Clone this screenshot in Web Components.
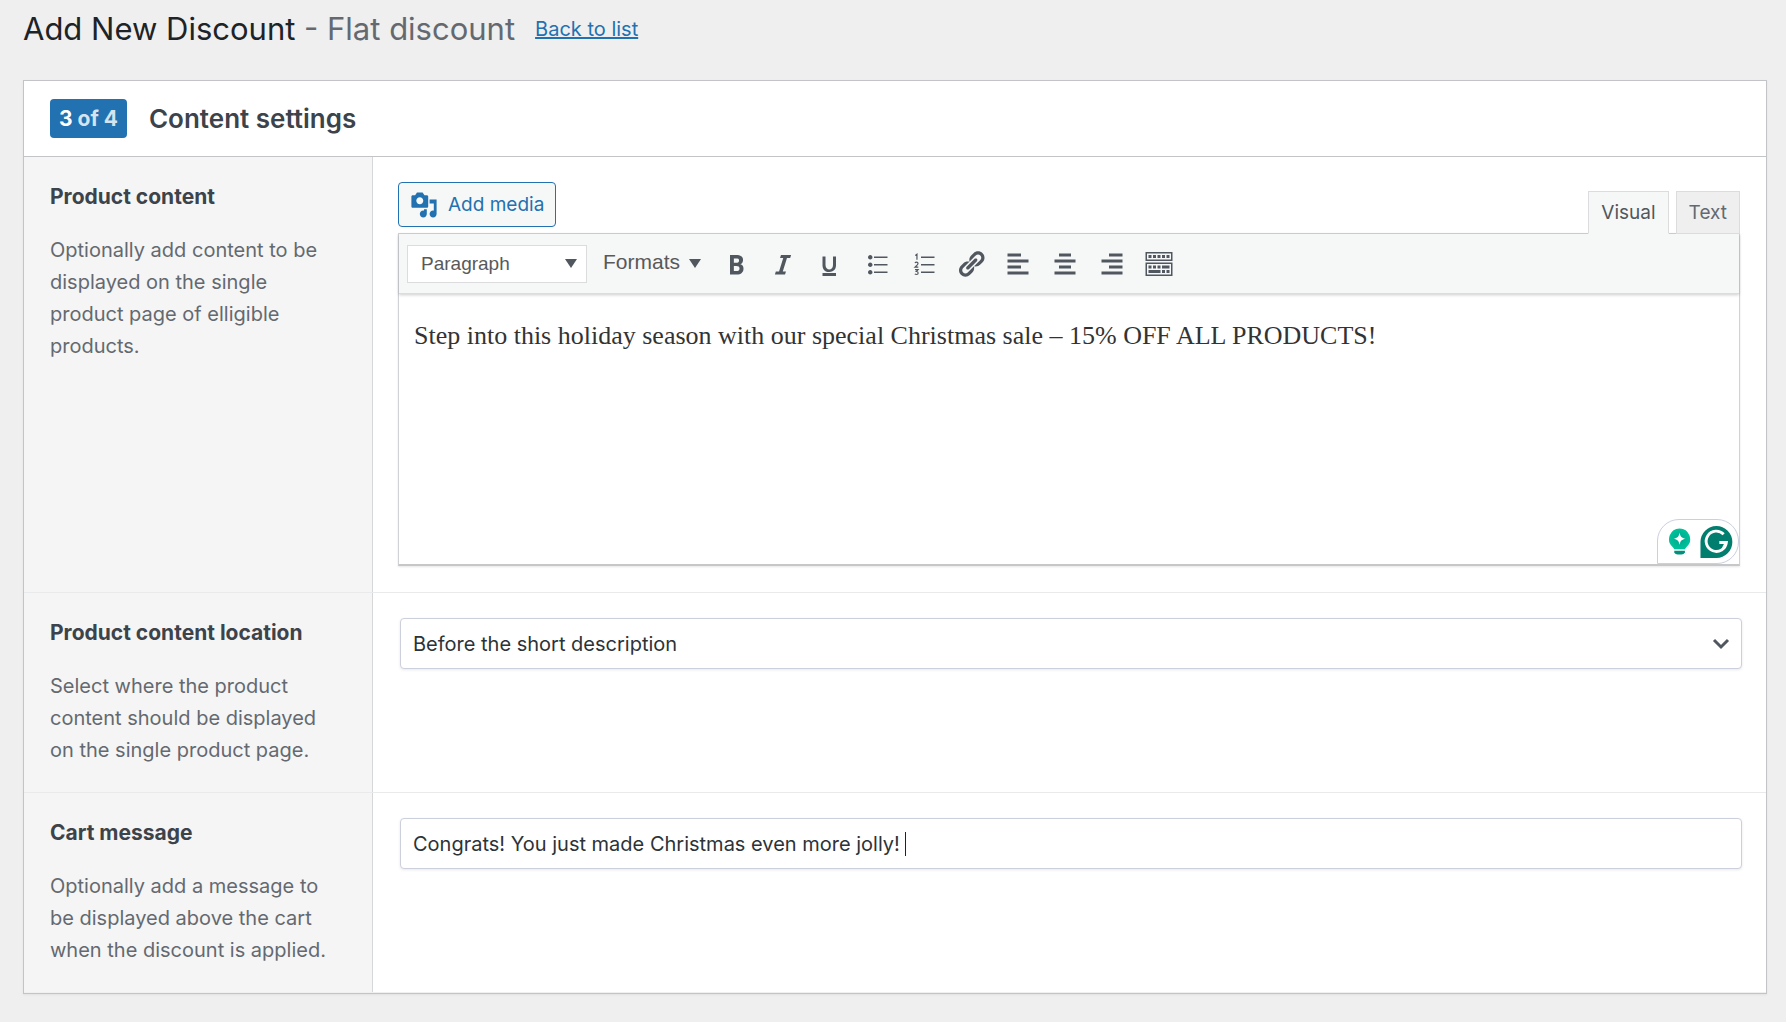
<!DOCTYPE html>
<html lang="en">
<head>
<meta charset="utf-8">
<title>Add New Discount</title>
<style>
  html { background: #efefef; }
  body { margin: 0; font-family: Inter, "Open Sans", sans-serif; color: #1d2327; }
</style>
</head>
<body>
<discount-page></discount-page>

<template id="tpl-page">
  <style>
    :host { display: block; padding: 0 19px 28px 23px; }
    label { cursor: inherit; }
    .field { display: grid; padding: 25px 24px 25px 27px; position: relative; }
    .field > * { grid-area: 1 / 1; }
    .control {
      appearance: none; box-sizing: border-box; width: 100%; height: 51px; margin: 0;
      padding: 0 12px; border: 1px solid #cbd0dc; border-radius: 4px; background: #fff;
      box-shadow: 0 1px 3px rgba(0, 0, 0, .09); font: 20px/28px Inter, sans-serif; color: #2c3338; outline: 0;
    }
    .chevron { justify-self: end; align-self: center; margin-right: 12px; pointer-events: none; }
    .caret { align-self: center; width: 1px; height: 24px; background: #1d2327; pointer-events: none; }
  </style>
  <page-header>
    Add New Discount
    <span slot="kind">- Flat discount</span>
    <a slot="link" href="#list">Back to list</a>
  </page-header>
  <settings-card step="3" total="4">
    <span slot="title">Content settings</span>
    <setting-row>
      <span slot="title">Product content</span>
      <span slot="description">Optionally add content to be displayed on the single product page of elligible products.</span>
      <rich-editor label="Product content">Step into this holiday season with our special Christmas sale – 15% OFF ALL PRODUCTS!</rich-editor>
    </setting-row>
    <setting-row>
      <label slot="title" for="location">Product content location</label>
      <span slot="description">Select where the product content should be displayed on the single product page.</span>
      <div class="field">
        <select class="control" id="location"><option>Before the short description</option></select>
        <svg class="chevron" width="18" height="12" viewBox="0 0 18 12"><path d="M2 2l7 7 7-7" fill="none" stroke="#50575e" stroke-width="3"/></svg>
      </div>
    </setting-row>
    <setting-row>
      <label slot="title" for="message">Cart message</label>
      <span slot="description">Optionally add a message to be displayed above the cart when the discount is applied.</span>
      <div class="field">
        <input class="control" id="message" type="text" value="Congrats! You just made Christmas even more jolly! ">
        <span class="caret"></span>
      </div>
    </setting-row>
  </settings-card>
</template>

<template id="tpl-header">
  <style>
    :host { display: flex; align-items: center; gap: 20px; height: 80px; box-sizing: border-box; padding-bottom: 22px; }
    h1 { margin: 0; font-size: 31px; line-height: 40px; font-weight: 400; }
    ::slotted(span) { color: #646970; }
    ::slotted(a) { color: #2271b1; font-size: 20px; line-height: 24px; }
  </style>
  <h1><slot></slot> <slot name="kind"></slot></h1>
  <slot name="link"></slot>
</template>

<template id="tpl-card">
  <style>
    :host { display: block; background: #fff; border: 1px solid #c3c4c7; box-shadow: 0 1px 2px rgba(0, 0, 0, .06); }
    header { display: flex; align-items: center; gap: 22px; height: 75px; padding: 0 26px; border-bottom: 1px solid #c3c4c7; }
    h2 { margin: 0; font-size: 26px; line-height: 32px; font-weight: 600; color: #3c434a; }
    .badge { padding: 0 9px; border-radius: 4px; background: #2271b1; color: #d3e3f0; font-size: 21px; line-height: 39px; font-weight: 700; }
    b { color: #fff; font-weight: 700; }
  </style>
  <header>
    <span class="badge"><b></b> of <span class="total"></span></span>
    <h2><slot name="title"></slot></h2>
  </header>
  <slot></slot>
</template>

<template id="tpl-row">
  <style>
    :host { display: flex; border-bottom: 1px solid #e9eaeb; }
    :host(:last-of-type) { border-bottom-color: #f0f0f1; }
    .side { box-sizing: border-box; flex: 0 0 349px; padding: 24px 32px 26px 26px; background: #f5f5f5; border-right: 1px solid #d5d7d9; }
    h3 { margin: 0 0 21px; font-size: 21px; line-height: 32px; font-weight: 700; color: #3c434a; }
    p { margin: 0; font-size: 20px; line-height: 32px; color: #646970; }
    .main { flex: 1; min-width: 0; }
  </style>
  <div class="side"><h3><slot name="title"></slot></h3><p><slot name="description"></slot></p></div>
  <div class="main"><slot></slot></div>
</template>

<template id="tpl-editor">
  <style>
    :host { display: block; padding: 25px 26px 26px 25px; }
    button, select, textarea { font-family: inherit; margin: 0; }
    .top { display: flex; justify-content: space-between; align-items: flex-end; }
    .media {
      display: flex; align-items: center; gap: 10px; height: 45px; padding: 0 11px; margin-bottom: 6px;
      border: 1px solid #2271b1; border-radius: 4px; background: #f6f7f7; color: #2271b1; font-size: 19px;
    }
    .tabs { display: flex; gap: 7px; margin-bottom: -1px; position: relative; z-index: 1; }
    .tabs button { box-sizing: border-box; height: 43px; padding: 0 12px; border: 1px solid #dcdcde; background: #efefef; color: #646970; font-size: 19px; line-height: 40px; }
    .tabs .on { background: #f6f7f7; border-bottom-color: #f6f7f7; color: #50575e; }
    .frame { position: relative; border: 1px solid #d0d2d5; border-bottom: 2px solid #c6c7c9; box-shadow: 0 1px 2px rgba(0, 0, 0, .1); }
    .bar { display: flex; align-items: center; height: 59px; padding: 0 8px; background: #f6f7f7; border-bottom: 1px solid #dcdcde; box-shadow: 0 1px 3px rgba(0, 0, 0, .2); position: relative; }
    .pick { display: grid; width: 180px; }
    .pick > * { grid-area: 1 / 1; }
    .pick select { appearance: none; box-sizing: border-box; height: 38px; padding: 0 13px; border: 1px solid #dcdcde; border-radius: 0; background: #fff; font: 19px/24px "Liberation Sans", sans-serif; color: #595959; }
    .pick svg { justify-self: end; align-self: center; margin-right: 10px; pointer-events: none; }
    .formats { display: flex; align-items: center; gap: 9px; padding: 0 12px 0 16px; border: 0; background: none; font: 21px/26px "Liberation Sans", sans-serif; color: #595959; }
    .formats span { padding-bottom: 3px; }
    .tool { display: grid; place-items: center; width: 45px; height: 45px; padding: 0; border: 0; background: none; color: #50575e; }
    .tools { display: flex; gap: 2px; }
    textarea { display: block; box-sizing: border-box; width: 100%; height: 270px; padding: 25px 15px; border: 0; resize: none; outline: 0; background: #fff; font: 26px/34px "Liberation Serif", serif; color: #333; }
    .assist {
      position: absolute; right: 0; bottom: 0; box-sizing: border-box; width: 82px; height: 45px; display: flex; align-items: center;
      gap: 9px; padding: 0 5px 0 10px; background: #fff; border: 1px solid #cbd0e0; border-radius: 22px 22px 22px 0;
    }
  </style>
  <div class="top">
    <button class="media" type="button"><tool-icon name="media" size="28"></tool-icon>Add media</button>
    <div class="tabs"><button class="on" type="button">Visual</button><button type="button">Text</button></div>
  </div>
  <div class="frame">
    <div class="bar">
      <div class="pick">
        <select aria-label="Block format"><option>Paragraph</option></select>
        <svg width="12" height="9" viewBox="0 0 12 9"><path d="M0 0h12L6 9z" fill="#50575e"/></svg>
      </div>
      <button class="formats" type="button"><span>Formats</span><svg width="12" height="9" viewBox="0 0 12 9"><path d="M0 0h12L6 9z" fill="#50575e"/></svg></button>
      <div class="tools"></div>
    </div>
    <textarea></textarea>
    <div class="assist">
      <svg width="24" height="30" viewBox="0 0 24 30">
        <defs><radialGradient id="glow"><stop offset="0" stop-color="#00a78e"/><stop offset="1" stop-color="#00c29a"/></radialGradient></defs>
        <path d="M12 1a11 11 0 0 1 7.200 19.200Q18 21.500 17.500 22.500h-11Q6 21.500 4.800 20.200A11 11 0 0 1 12 1z" fill="url(#glow)"/>
        <path d="M12 5.500c.8 4 2.200 5.400 6.200 6.200-4 .8-5.400 2.200-6.200 6.200-.8-4-2.200-5.400-6.200-6.200 4-.8 5.400-2.200 6.200-6.200z" fill="#fff"/>
        <path d="M6.500 24h11v1.500q-1 2.500-3.500 2.500h-4q-2.500 0-3.500-2.500z" fill="#00917c"/>
      </svg>
      <svg width="34" height="34" viewBox="0 0 34 34">
        <path d="M17 .5A16.500 16.500 0 1 1 17 33.500H.5V17A16.500 16.500 0 0 1 17 .5z" fill="#027e6f"/>
        <path d="M24.500 9A10.500 10.500 0 1 0 27.300 17.500H20M27.300 17.500L24 24" fill="none" stroke="#fff" stroke-width="3"/>
      </svg>
    </div>
  </div>
</template>

<script>
  const ICONS = {
    media: '<path d="M13 11V4c0-.55-.45-1-1-1h-1.67L9 1H5L3.670 3H2c-.55 0-1 .45-1 1v7c0 .55.45 1 1 1h10c.55 0 1-.45 1-1zM7 4.500c1.380 0 2.500 1.120 2.500 2.500S8.380 9.500 7 9.500 4.500 8.380 4.500 7 5.620 4.500 7 4.500zM14 6h5v10.500c0 1.380-1.120 2.500-2.500 2.500S14 17.880 14 16.500s1.120-2.500 2.500-2.500c.17 0 .34.02.5.05V9h-3V6zm-4 8.050V13h2v3.500c0 1.380-1.120 2.500-2.500 2.500S7 17.880 7 16.500 8.120 14 9.500 14c.17 0 .34.02.5.05z"/>',
    bold: '<path d="M6 4v13h4.540c1.370 0 2.460-.33 3.260-1 .8-.66 1.200-1.580 1.200-2.770 0-.84-.17-1.510-.51-2.010s-.9-.85-1.670-1.030v-.09c.57-.1 1.020-.4 1.360-.9s.51-1.130.51-1.910c0-1.140-.39-1.980-1.170-2.500C12.750 4.260 11.500 4 9.780 4H6zm2.570 5.150V6.260h1.360c.73 0 1.270.11 1.610.32.34.22.51.58.51 1.070 0 .54-.16.92-.47 1.150s-.82.35-1.510.35h-1.500zm0 2.190h1.600c1.440 0 2.160.53 2.160 1.610 0 .6-.17 1.050-.51 1.340s-.86.43-1.570.43H8.570v-3.380z"/>',
    italic: '<path d="M14.780 6h-2.130l-2.800 9h2.120l-.62 2H4.600l.62-2h2.140l2.800-9H8.030l.62-2h6.750z"/>',
    underline: '<path d="M14 5h-2v5.710c0 1.990-1.120 2.980-2.450 2.980-1.320 0-2.550-1-2.550-2.960V5H5v5.870c0 1.910 1 4.540 4.480 4.540 3.490 0 4.520-2.580 4.520-4.500V5zm0 13v-2H5v2h9z"/>',
    bullets: '<path d="M5.500 7C4.670 7 4 6.330 4 5.500 4 4.680 4.670 4 5.500 4 6.320 4 7 4.680 7 5.500 7 6.330 6.320 7 5.500 7zM8 5h9v1H8V5zm-2.500 7c-.83 0-1.500-.67-1.500-1.500C4 9.680 4.670 9 5.500 9c.82 0 1.500.68 1.500 1.500 0 .83-.68 1.500-1.500 1.500zM8 10h9v1H8v-1zm-2.500 7c-.83 0-1.500-.67-1.500-1.500 0-.82.67-1.500 1.500-1.500.82 0 1.500.68 1.500 1.500 0 .83-.68 1.500-1.500 1.500zM8 15h9v1H8v-1z"/>',
    numbers: '<path d="M8 5h9v1H8zM8 10h9v1H8zM8 15h9v1H8z"/><path d="M4.200 4.300l1.100-.8v3.700M4 9.400q.3-.7 1.100-.7.9 0 .9.900 0 .6-2 2.500h2.200M4 13.800h2L4.900 15q1.200 0 1.200 1t-1.100 1q-.7 0-1.100-.4" fill="none" stroke="currentColor" stroke-width=".8"/>',
    link: '<path d="M17.740 2.760c1.680 1.690 1.680 4.410 0 6.100l-1.530 1.520c-1.120 1.120-2.700 1.470-4.140 1.090l2.620-2.610.76-.77.76-.76c.84-.84.84-2.200 0-3.040-.84-.85-2.200-.85-3.040 0l-.77.76-3.380 3.380c-.37-1.440-.02-3.020 1.100-4.140l1.520-1.530c1.690-1.680 4.420-1.680 6.100 0zM8.590 13.430l5.340-5.340c.42-.42.42-1.100 0-1.520-.44-.43-1.130-.39-1.530 0l-5.330 5.340c-.42.42-.42 1.100 0 1.520.44.43 1.130.39 1.520 0zm-.76 2.290l4.140-4.150c.38 1.440.03 3.020-1.090 4.140l-1.520 1.530c-1.690 1.680-4.410 1.680-6.100 0-1.680-1.680-1.680-4.420 0-6.100l1.530-1.520c1.120-1.120 2.700-1.470 4.140-1.100l-4.140 4.150c-.85.84-.85 2.200 0 3.050.84.84 2.200.84 3.040 0z"/>',
    left: '<path d="M12 5V3H3v2h9zm5 4V7H3v2h14zm-5 4v-2H3v2h9zm5 4v-2H3v2h14z"/>',
    center: '<path d="M14 5V3H6v2h8zm3 4V7H3v2h14zm-3 4v-2H6v2h8zm3 4v-2H3v2h14z"/>',
    right: '<path d="M17 5V3H8v2h9zm0 4V7H3v2h14zm0 4v-2H8v2h9zm0 4v-2H3v2h14z"/>',
    more: '<path d="M19 2v6H1V2h18zm-1 5V3H2v4h16zM5 4v2H3V4h2zm3 0v2H6V4h2zm3 0v2H9V4h2zm3 0v2h-2V4h2zm3 0v2h-2V4h2zm2 5v9H1V9h18zm-1 8v-7H2v7h16zM5 11v2H3v-2h2zm3 0v2H6v-2h2zm3 0v2H9v-2h2zm6 0v2h-5v-2h5zm-6 3v2H3v-2h8zm3 0v2h-2v-2h2zm3 0v2h-2v-2h2z"/>'
  };
  const TOOLS = [['bold', 'Bold'], ['italic', 'Italic'], ['underline', 'Underline'], ['bullets', 'Bulleted list'],
    ['numbers', 'Numbered list'], ['link', 'Insert link'], ['left', 'Align left'], ['center', 'Align center'],
    ['right', 'Align right'], ['more', 'Toolbar toggle']];

  class Templated extends HTMLElement {
    connectedCallback() {
      if (this.shadowRoot) return;
      const root = this.attachShadow({ mode: 'open' });
      root.append(document.getElementById(this.constructor.template).content.cloneNode(true));
      this.ready(root);
    }
    ready() {}
  }

  customElements.define('tool-icon', class extends HTMLElement {
    connectedCallback() {
      if (this.shadowRoot) return;
      const size = this.getAttribute('size') || 30;
      this.attachShadow({ mode: 'open' }).innerHTML =
        `<style>:host{display:block}svg{display:block}</style><svg width="${size}" height="${size}" viewBox="0 0 20 20" fill="currentColor" aria-hidden="true">${ICONS[this.getAttribute('name')]}</svg>`;
    }
  });

  customElements.define('page-header', class extends Templated { static template = 'tpl-header'; });

  customElements.define('settings-card', class extends Templated {
    static template = 'tpl-card';
    ready(root) {
      root.querySelector('b').textContent = this.getAttribute('step');
      root.querySelector('.total').textContent = this.getAttribute('total');
    }
  });

  customElements.define('setting-row', class extends Templated { static template = 'tpl-row'; });

  customElements.define('rich-editor', class extends Templated {
    static template = 'tpl-editor';
    ready(root) {
      const tools = root.querySelector('.tools');
      for (const [name, label] of TOOLS) {
        const button = document.createElement('button');
        button.type = 'button';
        button.className = 'tool';
        button.setAttribute('aria-label', label);
        button.innerHTML = `<tool-icon name="${name}"></tool-icon>`;
        tools.append(button);
      }
      const area = root.querySelector('textarea');
      area.value = this.textContent.trim();
      area.spellcheck = false;
      area.setAttribute('aria-label', this.getAttribute('label'));
    }
  });

  customElements.define('discount-page', class extends Templated {
    static template = 'tpl-page';
    ready(root) {
      // Keep the insertion mark at the end of the typed message.
      const input = root.getElementById('message');
      const caret = root.querySelector('.caret');
      const pen = document.createElement('canvas').getContext('2d');
      const place = () => {
        const style = getComputedStyle(input);
        pen.font = `${style.fontSize} ${style.fontFamily}`;
        caret.style.marginLeft = Math.round(parseInt(style.paddingLeft) + 1 + pen.measureText(input.value).width) + 'px';
      };
      input.addEventListener('input', place);
      place();
    }
  });
</script>
</body>
</html>
